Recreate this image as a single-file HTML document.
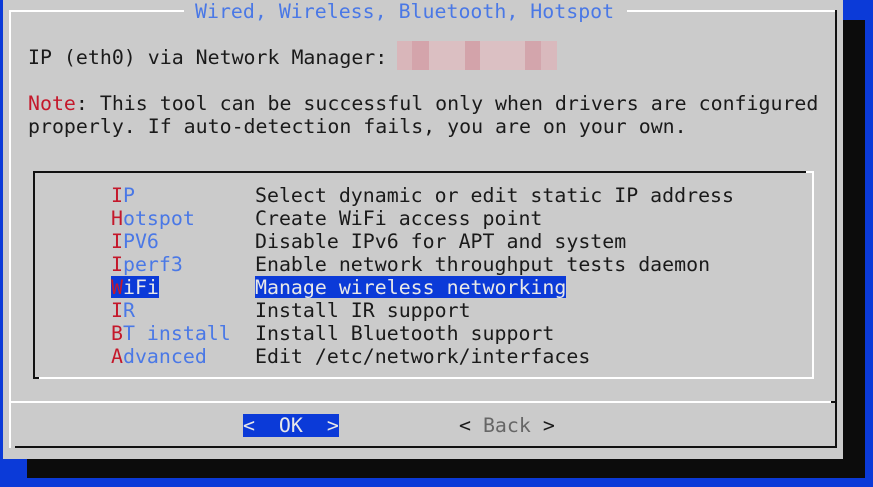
<!DOCTYPE html>
<html><head><style>
body{margin:0;width:873px;height:487px;background:#0b3ad8;position:relative;overflow:hidden;font-family:"DejaVu Sans Mono","Liberation Mono",monospace;font-size:19.9px}
div{position:absolute}
.t{line-height:23px;white-space:pre;color:#1a1a1a}
.r{color:#c4182b}.b{color:#4a78e6}
.sel{background:#0b3ad8;color:#e8e8e8}
</style></head><body>
<div style="left:27px;top:20px;width:838px;height:458px;background:#0c0c0c"></div>
<div style="left:3px;top:0;width:840px;height:459px;background:#cbcbcb"></div>
<div style="left:9px;top:10px;width:175px;height:2px;background:#fff"></div>
<div style="left:627px;top:10px;width:209px;height:2px;background:#fff"></div>
<div style="left:9px;top:10px;width:2px;height:438px;background:#fff"></div>
<div style="left:835px;top:10px;width:2px;height:438px;background:#111"></div>
<div style="left:15px;top:446px;width:822px;height:2px;background:#111"></div>
<div style="left:10px;top:401px;width:826px;height:2px;background:#fff"></div>
<div style="left:831px;top:401px;width:6px;height:2px;background:#111"></div>
<div class="t b" style="left:195px;top:0px">Wired, Wireless, Bluetooth, Hotspot</div>
<div class="t" style="left:28px;top:46px">IP (eth0) via Network Manager:</div>
<div style="left:397px;top:41px;width:160px;height:29px;background:linear-gradient(90deg,#d9b6ba 0 15px,#d4a4ab 15px 32px,#dbbfc2 32px 68px,#d3a3aa 68px 83px,#dbc0c3 83px 128px,#d3a5ac 128px 144px,#d9b9bd 144px)"></div>
<div class="t" style="left:28px;top:92px"><span class="r">Note</span>: This tool can be successful only when drivers are configured</div>
<div class="t" style="left:28px;top:115px">properly. If auto-detection fails, you are on your own.</div>
<div style="left:33px;top:171px;width:774px;height:2px;background:#111"></div>
<div style="left:806px;top:171px;width:8px;height:2px;background:#fff"></div>
<div style="left:812px;top:171px;width:2px;height:208px;background:#fff"></div>
<div style="left:33px;top:377px;width:781px;height:2px;background:#fff"></div>
<div style="left:33px;top:171px;width:2px;height:208px;background:#111"></div>
<div style="left:33px;top:377px;width:6px;height:2px;background:#111"></div>
<div class="t" style="left:111px;top:184px"><span class="r">I</span><span class="b">P</span></div>
<div class="t" style="left:111px;top:207px"><span class="r">H</span><span class="b">otspot</span></div>
<div class="t" style="left:111px;top:230px"><span class="r">I</span><span class="b">PV6</span></div>
<div class="t" style="left:111px;top:253px"><span class="r">I</span><span class="b">perf3</span></div>
<div class="t sel" style="left:111px;top:276px;height:22px"><span class="r">W</span>iFi</div>
<div class="t" style="left:111px;top:299px"><span class="r">I</span><span class="b">R</span></div>
<div class="t" style="left:111px;top:322px"><span class="r">B</span><span class="b">T install</span></div>
<div class="t" style="left:111px;top:345px"><span class="r">A</span><span class="b">dvanced</span></div>
<div class="t" style="left:255px;top:184px">Select dynamic or edit static IP address</div>
<div class="t" style="left:255px;top:207px">Create WiFi access point</div>
<div class="t" style="left:255px;top:230px">Disable IPv6 for APT and system</div>
<div class="t" style="left:255px;top:253px">Enable network throughput tests daemon</div>
<div class="t sel" style="left:255px;top:276px;height:22px">Manage wireless networking</div>
<div class="t" style="left:255px;top:299px">Install IR support</div>
<div class="t" style="left:255px;top:322px">Install Bluetooth support</div>
<div class="t" style="left:255px;top:345px">Edit /etc/network/interfaces</div>
<div class="t sel" style="left:243px;top:414px;height:23px">&lt;  OK  &gt;</div>
<div class="t" style="left:459px;top:414px">&lt; <span style="color:#666">Back</span> &gt;</div>
</body></html>
